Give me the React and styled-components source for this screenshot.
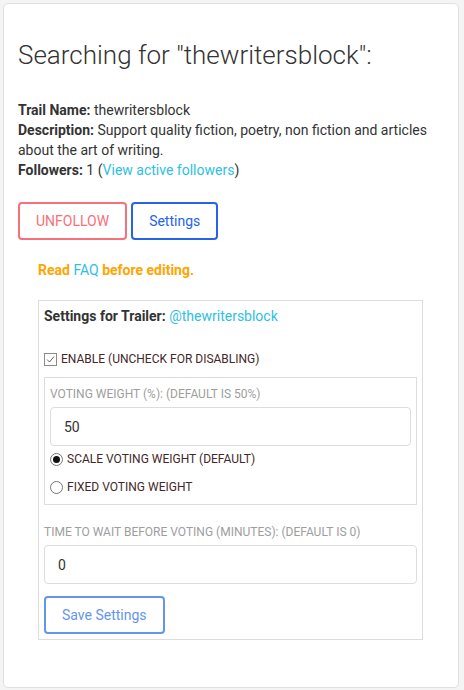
import React from "react";
import styled, { createGlobalStyle } from "styled-components";

const GlobalStyle = createGlobalStyle`
  body {
    margin: 0;
    background: #f4f4f4;
    font-family: Roboto, "Liberation Sans", Arial, sans-serif;
    color: #333;
  }
`;

const Card = styled.div`
  margin: 3px 5px 4px 3px;
  background: #fff;
  border: 1px solid #e0e0e0;
  border-radius: 5px;
  padding: 34px 14px 47px 14px;
`;

const Title = styled.h2`
  margin: 0 0 28px 0;
  font-size: 26px;
  font-weight: 300;
  line-height: 34px;
  color: #333;
`;

const Info = styled.div`
  font-size: 14px;
  line-height: 20px;
  color: #333;
`;

const Label = styled.b`
  font-weight: 700;
`;

const Link = styled.a`
  color: #2ec0e4;
  text-decoration: none;
  font-weight: 400;
`;

const ButtonRow = styled.div`
  display: flex;
  gap: 4px;
  margin-top: 22px;
`;

const OutlineButton = styled.button`
  height: 38px;
  padding: 0 ${(p) => p.$pad || 16}px;
  background: #fff;
  border: 2px solid ${(p) => p.$color};
  border-radius: 4px;
  color: ${(p) => p.$color};
  font-family: Roboto, "Liberation Sans", Arial, sans-serif;
  font-size: 14px;
  text-transform: ${(p) => (p.$upper ? "uppercase" : "none")};
`;

const Section = styled.div`
  padding: 0 21px 0 20px;
`;

const Notice = styled.p`
  margin: 20px 0 20px 0;
  font-size: 14px;
  line-height: 20px;
  font-weight: 700;
  color: #ffa500;
`;

const SettingsBox = styled.div`
  border: 1px solid #ddd;
  padding: 5px 5px 5px 5px;
`;

const BoxTitle = styled.div`
  font-size: 14px;
  line-height: 20px;
  margin-bottom: 25px;
`;

const OptionRow = styled.label`
  display: flex;
  align-items: center;
  gap: 4px;
  font-size: 12px;
  line-height: 16px;
  color: #43282a;
  text-transform: uppercase;
  margin: ${(p) => p.$margin || "0"};
`;

const CheckBox = styled.span`
  width: 11px;
  height: 11px;
  border: 1px solid #8a8a8a;
  display: flex;
  align-items: center;
  justify-content: center;
`;

const Radio = styled.span`
  box-sizing: border-box;
  width: 13px;
  height: 13px;
  border-radius: 50%;
  border: 1px solid #777;
  display: flex;
  align-items: center;
  justify-content: center;
  &::after {
    content: "";
    width: 7px;
    height: 7px;
    border-radius: 50%;
    background: ${(p) => (p.$checked ? "#111" : "transparent")};
  }
`;

const FieldSet = styled.div`
  border: 1px solid #ddd;
  padding: 5px 5px 9px 5px;
  margin-top: 10px;
`;

const FieldLabel = styled.div`
  font-size: 12px;
  line-height: 20px;
  color: #9e9e9e;
  text-transform: uppercase;
  margin: ${(p) => p.$margin || "0"};
`;

const Input = styled.input`
  box-sizing: border-box;
  display: block;
  width: 100%;
  height: 39px;
  margin-top: 3px;
  padding: 0 13px;
  border: 1px solid #ddd;
  border-radius: 4px;
  font-family: Roboto, "Liberation Sans", Arial, sans-serif;
  font-size: 14px;
  color: #333;
  background: #fff;
`;

const SaveRow = styled.div`
  margin-top: 12px;
`;

export default function App() {
  return (
    <>
      <GlobalStyle />
      <Card>
        <Title>Searching for "thewritersblock":</Title>
        <Info>
          <Label>Trail Name:</Label> thewritersblock
          <br />
          <Label>Description:</Label> Support quality fiction, poetry, non
          fiction and articles about the art of writing.
          <br />
          <Label>Followers:</Label> 1 (<Link href="#">View active followers</Link>)
        </Info>
        <ButtonRow>
          <OutlineButton $color="#f7707a" $upper $pad={16}>
            Unfollow
          </OutlineButton>
          <OutlineButton $color="#2563eb" $pad={16}>
            Settings
          </OutlineButton>
        </ButtonRow>
        <Section>
          <Notice>
            Read <Link href="#">FAQ</Link> before editing.
          </Notice>
          <SettingsBox>
            <BoxTitle>
              <Label>Settings for Trailer:</Label>{" "}
              <Link href="#">@thewritersblock</Link>
            </BoxTitle>
            <OptionRow>
              <CheckBox>
                <svg width="9" height="9" viewBox="0 0 9 9">
                  <path d="M1 4.5 L3.5 7 L8 1.5" fill="none" stroke="#666" strokeWidth="1" />
                </svg>
              </CheckBox>
              Enable (uncheck for disabling)
            </OptionRow>
            <FieldSet>
              <FieldLabel $margin="1px 0 0 0">Voting weight (%): (default is 50%)</FieldLabel>
              <Input defaultValue="50" />
              <OptionRow $margin="5px 0 0 0">
                <Radio $checked />
                Scale voting weight (default)
              </OptionRow>
              <OptionRow $margin="12px 0 0 0">
                <Radio />
                Fixed voting weight
              </OptionRow>
            </FieldSet>
            <FieldLabel $margin="17px 0 0 0">
              Time to wait before voting (minutes): (default is 0)
            </FieldLabel>
            <Input defaultValue="0" />
            <SaveRow>
              <OutlineButton $color="#6495ed" $pad={16}>
                Save Settings
              </OutlineButton>
            </SaveRow>
          </SettingsBox>
        </Section>
      </Card>
    </>
  );
}
